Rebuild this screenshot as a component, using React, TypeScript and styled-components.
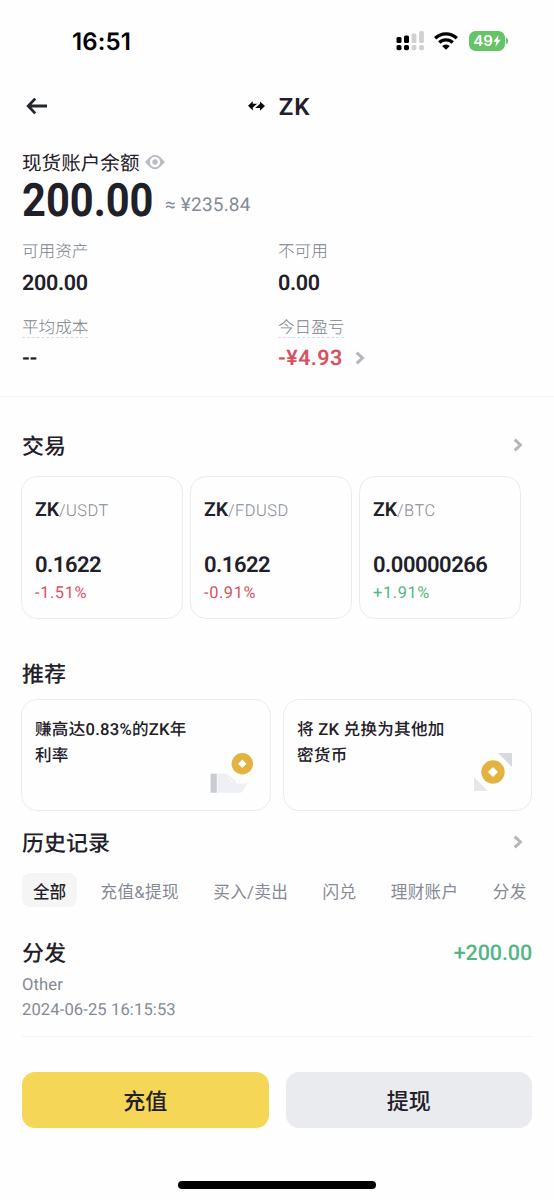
import React from "react";
import styled, { createGlobalStyle } from "styled-components";

const color = {
  ink: "#1f2029",
  muted: "#858a94",
  line: "#ececee",
  red: "#d9515f",
  green: "#52b585",
  chevron: "#b3b6bb",
};

const GlobalStyle = createGlobalStyle`
  *, *::before, *::after { box-sizing: border-box; }
  body {
    margin: 0;
    background: #fefefe;
    color: ${color.ink};
    font-family: Roboto, "Noto Sans CJK SC", sans-serif;
    text-rendering: geometricPrecision;
  }
  button { font: inherit; color: inherit; border: 0; padding: 0; background: none; }
`;

const Screen = styled.div`
  width: 554px;
  height: 1200px;
  overflow: hidden;
  display: flex;
  flex-direction: column;
`;

const StatusBar = styled.div`
  height: 82px;
  padding: 0 46px 0 72px;
  display: flex;
  align-items: center;
  justify-content: space-between;
  color: #000;
`;

const Clock = styled.span`
  padding-top: 2px;
  font: 600 24px/28px Inter, sans-serif;
  letter-spacing: 0.1px;
`;

const StatusIcons = styled.div`
  display: flex;
  align-items: center;
`;

const Wifi = styled.svg`
  margin-left: 9px;
`;

const BatteryGroup = styled.div`
  display: flex;
  align-items: center;
  margin-left: 10px;
`;

const Battery = styled.div`
  width: 36px;
  height: 20px;
  border-radius: 6.5px;
  background: #65c466;
  color: #fff;
  display: flex;
  align-items: center;
  justify-content: center;
  font: 600 15px/20px Inter, sans-serif;
`;

const BatteryTip = styled.div`
  width: 2px;
  height: 6px;
  margin-left: 1px;
  border-radius: 0 2px 2px 0;
  background: #65c466;
`;

const Header = styled.header`
  height: 48px;
  padding: 0 22px 0 26px;
  display: grid;
  grid-template-columns: 60px 1fr 60px;
  align-items: center;
`;

const IconButton = styled.button`
  display: flex;
  align-items: center;
`;

const Title = styled.h1`
  margin: 0;
  display: flex;
  align-items: center;
  justify-content: center;
  gap: 14px;
  font: 600 24px/30px Roboto, sans-serif;
  letter-spacing: 0.9px;
`;

const Ticker = styled.span`
  padding-top: 2px;
`;

const Balance = styled.section`
  padding: 20px 22px 26px;
  border-bottom: 1px solid #f3f3f5;
`;

const BalanceLabel = styled.div`
  height: 24px;
  display: flex;
  align-items: center;
  gap: 5px;
  font-size: 19.6px;
  line-height: 24px;
`;

const BalanceName = styled.span`
  padding-top: 4px;
`;

const BalanceRow = styled.div`
  height: 48px;
  margin-top: 2px;
  display: flex;
  align-items: center;
  line-height: 50px;
`;

const Total = styled.span`
  width: 143px;
  padding-top: 2px;
  font-size: 46px;
  font-weight: 700;
  transform: scaleX(0.905);
  transform-origin: left center;
`;

const Fiat = styled.span`
  padding-top: 9px;
  font-size: 19px;
  color: ${color.muted};
  letter-spacing: 0.2px;
`;

const Stats = styled.div`
  margin-top: 14px;
  display: grid;
  grid-template-columns: 256px 1fr;
  row-gap: 20px;
`;

const Stat = styled.div<{ $gap?: number }>`
  display: flex;
  flex-direction: column;
  align-items: flex-start;
  gap: ${(p) => p.$gap ?? 9}px;
`;

const StatLabel = styled.span<{ $hint?: boolean }>`
  height: ${(p) => (p.$hint ? 23 : 24)}px;
  margin-bottom: ${(p) => (p.$hint ? 1 : 0)}px;
  font-size: 16.6px;
  line-height: ${(p) => (p.$hint ? 28 : 29)}px;
  color: #7a7f89;
  font-weight: 300;
  border-bottom: 1px dashed ${(p) => (p.$hint ? "#d8dadd" : "transparent")};
`;

const StatValue = styled.span<{ $loss?: boolean }>`
  height: 24px;
  display: flex;
  align-items: center;
  gap: 12px;
  font-size: 21.5px;
  font-weight: 600;
  line-height: 26px;
  letter-spacing: ${(p) => (p.$loss ? 0.4 : -0.3)}px;
  color: ${(p) => (p.$loss ? color.red : color.ink)};
`;

const Figure = styled.span`
  padding-top: 2px;
`;

const SectionHead = styled.div<{ $top: number }>`
  height: 30px;
  margin-top: ${(p) => p.$top}px;
  padding: 0 31px 0 22px;
  display: flex;
  align-items: center;
  justify-content: space-between;
`;

const SectionTitle = styled.h2`
  margin: 0;
  padding-top: 5px;
  font-size: 22px;
  font-weight: 500;
  line-height: 30px;
`;

const Pairs = styled.div`
  margin-top: 16px;
  padding-left: 21px;
  display: flex;
  gap: 7px;
`;

const PairCard = styled.article`
  width: 162px;
  height: 143px;
  padding: 20px 13px;
  border: 1.5px solid ${color.line};
  border-radius: 16px;
`;

const PairName = styled.div`
  font-size: 16.4px;
  font-weight: 300;
  line-height: 26px;
  letter-spacing: 0.5px;
  color: ${color.muted};
`;

const Base = styled.b`
  font-size: 19.4px;
  font-weight: 600;
  letter-spacing: 0;
  color: ${color.ink};
`;

const Price = styled.div`
  margin-top: 27px;
  font-size: 22px;
  font-weight: 600;
  line-height: 28px;
  letter-spacing: -0.5px;
`;

const Change = styled.div<{ $up: boolean }>`
  margin-top: 2px;
  font-size: 16.4px;
  line-height: 24px;
  letter-spacing: 0.6px;
  color: ${(p) => (p.$up ? color.green : color.red)};
`;

const Offers = styled.div`
  margin-top: 11px;
  padding: 0 22px 0 21px;
  display: grid;
  grid-template-columns: 250px 249px;
  gap: 12px;
`;

const OfferCard = styled.article`
  height: 112px;
  padding: 15px 17px 16px 13px;
  display: flex;
  justify-content: space-between;
  border: 1.5px solid ${color.line};
  border-radius: 16px;
`;

const OfferText = styled.p`
  margin: 0;
  padding-top: 3px;
  font-size: 16.6px;
  font-weight: 500;
  line-height: 25.5px;
  letter-spacing: 0.25px;
  white-space: nowrap;
`;

const OfferArt = styled.svg`
  align-self: flex-end;
  flex: none;
  margin-left: -20px;
`;

const Tabs = styled.nav`
  height: 34px;
  margin-top: 16px;
  padding-left: 22px;
  display: flex;
  gap: 12.3px;
`;

const Tab = styled.button<{ $active?: boolean }>`
  padding: 3px 11px 0;
  border-radius: 8px;
  font-size: 16.6px;
  line-height: 34px;
  letter-spacing: ${(p) => (p.$active ? 0 : 0.35)}px;
  white-space: nowrap;
  font-weight: ${(p) => (p.$active ? 500 : 400)};
  color: ${(p) => (p.$active ? color.ink : color.muted)};
  background: ${(p) => (p.$active ? "#f5f5f6" : "transparent")};
`;

const Entry = styled.article`
  margin: 30px 22px 0;
  height: 100px;
  border-bottom: 1px solid #f3f3f5;
`;

const EntryTop = styled.div`
  height: 30px;
  display: flex;
  align-items: center;
  justify-content: space-between;
  margin-bottom: 6px;
`;

const Amount = styled.span`
  padding-top: 3px;
  font-size: 21.5px;
  font-weight: 500;
  color: ${color.green};
  letter-spacing: -0.1px;
`;

const EntryMeta = styled.div`
  font-size: 16.6px;
  line-height: 25px;
  color: ${color.muted};
  letter-spacing: 0.1px;
`;

const Actions = styled.div`
  margin: 35px 22px 0;
  display: grid;
  grid-template-columns: 1fr 1fr;
  gap: 17px;
`;

const Action = styled.button<{ $primary?: boolean }>`
  height: 56px;
  padding-top: 4px;
  border-radius: 13px;
  font-size: 22px;
  font-weight: 500;
  line-height: 52px;
  background: ${(p) => (p.$primary ? "#f5d657" : "#eaebef")};
`;

const HomeBar = styled.div`
  width: 198px;
  height: 8px;
  margin: 53px auto 0 178px;
  border-radius: 4px;
  background: #000;
`;

const Chevron = () => (
  <svg width="10" height="14" viewBox="0 0 10 14" fill="none" stroke={color.chevron} strokeWidth="3">
    <path d="M1.7 1.6 7.4 7 1.7 12.4" />
  </svg>
);

const Signal = () => (
  <svg width="28" height="20" viewBox="0 0 28 20">
    <g fill="#000">
      <rect x="0.5" y="6" width="5" height="6" rx="1.5" />
      <rect x="8" y="4.5" width="5" height="7.5" rx="1.5" />
      <rect x="0.5" y="14" width="5" height="5.2" rx="1.8" />
      <rect x="8" y="14" width="5" height="5.2" rx="1.8" />
    </g>
    <g fill="#d0d0d0">
      <rect x="15.6" y="2.4" width="4.8" height="9.6" rx="1.5" />
      <rect x="23.1" y="0" width="4.8" height="12" rx="1.5" />
      <rect x="15.6" y="14" width="4.8" height="5.2" rx="1.8" />
      <rect x="23.1" y="14" width="4.8" height="5.2" rx="1.8" />
    </g>
  </svg>
);

const pairs = [
  { quote: "USDT", price: "0.1622", change: "-1.51%" },
  { quote: "FDUSD", price: "0.1622", change: "-0.91%" },
  { quote: "BTC", price: "0.00000266", change: "+1.91%" },
];

const tabs = ["全部", "充值&提现", "买入/卖出", "闪兑", "理财账户", "分发"];

export default function App() {
  return (
    <Screen>
      <GlobalStyle />
      <StatusBar>
        <Clock>16:51</Clock>
        <StatusIcons>
          <Signal />
          <Wifi width="26" height="20" viewBox="0 0 26 20" fill="none" stroke="#000" strokeWidth="3.4">
            <path d="M2.2 7.2a15.6 15.6 0 0 1 21.6 0" />
            <path d="M6.3 11.6a9.7 9.7 0 0 1 13.4 0" />
            <path d="M13 18.8 9.1 15a5.6 5.6 0 0 1 7.8 0Z" fill="#000" stroke="none" />
          </Wifi>
          <BatteryGroup>
            <Battery>
              49
              <svg width="8" height="12" viewBox="0 0 8 12" fill="#fff">
                <path d="M5.6 0 .4 6.8h2.9L2.4 12l5.3-7.2H4.8Z" />
              </svg>
            </Battery>
            <BatteryTip />
          </BatteryGroup>
        </StatusIcons>
      </StatusBar>

      <Header>
        <IconButton aria-label="返回">
          <svg width="22" height="18" viewBox="0 0 22 18" fill="none" stroke="#23262d" strokeWidth="2.8">
            <path d="M21 9H2.6M9.2 1.6 2.2 9l7 7.4" />
          </svg>
        </IconButton>
        <Title>
          <svg width="17" height="10" viewBox="0 0 17 10" fill="#0b0c10">
            <path d="M0 4.8 4.8.2v2.6h4.4L4.8 6.4v3Z" />
            <path d="M17 5 12 .4v2.4L7.2 6.9H12v2.8Z" />
          </svg>
          <Ticker>ZK</Ticker>
        </Title>
      </Header>

      <Balance>
        <BalanceLabel>
          <BalanceName>现货账户余额</BalanceName>
          <svg width="20" height="16" viewBox="0 0 20 16" fill="none">
            <path d="M0 8 4.6 3.2Q10-1.8 15.4 3.2L20 8l-4.6 4.8q-5.4 5-10.8 0Z" fill="#b9bcc4" />
            <circle cx="10" cy="8" r="3.9" stroke="#fefefe" strokeWidth="2.5" />
          </svg>
        </BalanceLabel>
        <BalanceRow>
          <Total>200.00</Total>
          <Fiat>≈ ¥235.84</Fiat>
        </BalanceRow>
        <Stats>
          <Stat>
            <StatLabel>可用资产</StatLabel>
            <StatValue>
              <Figure>200.00</Figure>
            </StatValue>
          </Stat>
          <Stat>
            <StatLabel>不可用</StatLabel>
            <StatValue>
              <Figure>0.00</Figure>
            </StatValue>
          </Stat>
          <Stat $gap={7}>
            <StatLabel $hint>平均成本</StatLabel>
            <StatValue>
              <Figure>--</Figure>
            </StatValue>
          </Stat>
          <Stat $gap={7}>
            <StatLabel $hint>今日盈亏</StatLabel>
            <StatValue $loss>
              <Figure>-¥4.93</Figure>
              <Chevron />
            </StatValue>
          </Stat>
        </Stats>
      </Balance>

      <SectionHead $top={33}>
        <SectionTitle>交易</SectionTitle>
        <Chevron />
      </SectionHead>
      <Pairs>
        {pairs.map((p) => (
          <PairCard key={p.quote}>
            <PairName>
              <Base>ZK</Base>/{p.quote}
            </PairName>
            <Price>{p.price}</Price>
            <Change $up={p.change.startsWith("+")}>{p.change}</Change>
          </PairCard>
        ))}
      </Pairs>

      <SectionHead $top={39}>
        <SectionTitle>推荐</SectionTitle>
      </SectionHead>
      <Offers>
        <OfferCard>
          <OfferText>
            赚高达0.83%的ZK年
            <br />
            利率
          </OfferText>
          <OfferArt width="43" height="41" viewBox="0 0 43 41">
            <path d="M.6 20.7h6.2v19H.6Z" fill="#c8cad6" />
            <path
              d="M7.4 20.7H15q2 0 3.300 1.300l7 5.500q1.500 1.500 0 3h11.700l-3.600 7q-1.200 2.200-3.600 2.200H7.400Z"
              fill="#eff0f5"
            />
            <path d="m17.500 24 6 5.800" stroke="#fefefe" strokeWidth="1" />
            <circle cx="32.3" cy="10.8" r="10.7" fill="#e3b341" />
            <path d="m32.3 6.600 4.200 4.200-4.200 4.200-4.200-4.200Z" fill="#fff" />
          </OfferArt>
        </OfferCard>
        <OfferCard>
          <OfferText>
            将 ZK 兑换为其他加
            <br />
            密货币
          </OfferText>
          <OfferArt width="40" height="42" viewBox="0 0 40 42">
            <path d="M24 1H38V15Z" fill="#d8d9dc" />
            <path d="M0 25v14h14Z" fill="#e7e7ea" />
            <circle cx="19" cy="20" r="11.7" fill="#e3b341" />
            <path d="m19 15 5 5-5 5-5-5Z" fill="#fff" />
          </OfferArt>
        </OfferCard>
      </Offers>

      <SectionHead $top={16}>
        <SectionTitle>历史记录</SectionTitle>
        <Chevron />
      </SectionHead>
      <Tabs>
        {tabs.map((t, i) => (
          <Tab key={t} $active={i === 0}>
            {t}
          </Tab>
        ))}
      </Tabs>
      <Entry>
        <EntryTop>
          <SectionTitle>分发</SectionTitle>
          <Amount>+200.00</Amount>
        </EntryTop>
        <EntryMeta>Other</EntryMeta>
        <EntryMeta>2024-06-25 16:15:53</EntryMeta>
      </Entry>

      <Actions>
        <Action $primary>充值</Action>
        <Action>提现</Action>
      </Actions>
      <HomeBar />
    </Screen>
  );
}
